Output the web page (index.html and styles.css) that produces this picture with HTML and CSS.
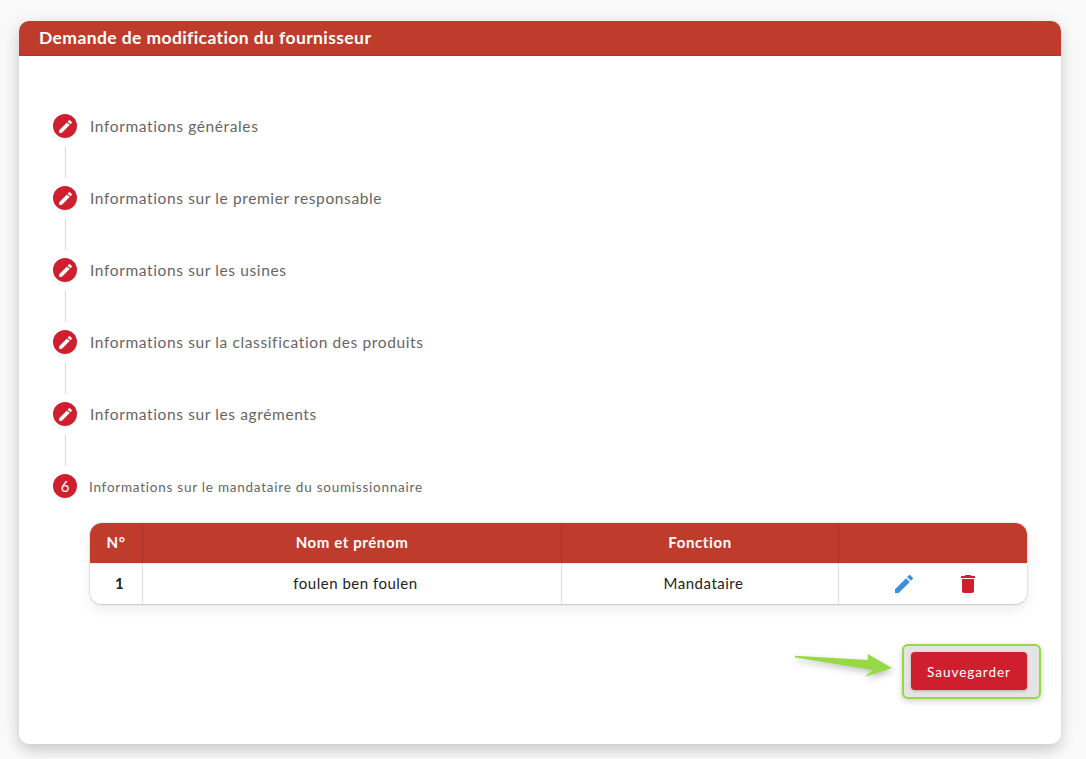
FILE: index.html
```html
<!DOCTYPE html>
<html lang="fr">
<head>
<meta charset="utf-8">
<title>Demande de modification du fournisseur</title>
<link rel="stylesheet" href="styles.css">
</head>
<body>
<main class="card">
  <header class="card-head">Demande de modification du fournisseur</header>
  <div class="card-body">
    <ol class="steps">
      <li class="step">
        <span class="badge"><svg class="badge-icon" viewBox="0 0 24 24"><path d="M3 17.25V21h3.75L17.81 9.94l-3.75-3.75L3 17.25zM20.71 7.04a1 1 0 0 0 0-1.41l-2.34-2.34a1 1 0 0 0-1.41 0l-1.83 1.83 3.75 3.75 1.83-1.83z"/></svg></span>
        <span class="step-label">Informations générales</span>
      </li>
      <li class="connector"></li>
      <li class="step">
        <span class="badge"><svg class="badge-icon" viewBox="0 0 24 24"><path d="M3 17.25V21h3.75L17.81 9.94l-3.75-3.75L3 17.25zM20.71 7.04a1 1 0 0 0 0-1.41l-2.34-2.34a1 1 0 0 0-1.41 0l-1.83 1.83 3.75 3.75 1.83-1.83z"/></svg></span>
        <span class="step-label">Informations sur le premier responsable</span>
      </li>
      <li class="connector"></li>
      <li class="step">
        <span class="badge"><svg class="badge-icon" viewBox="0 0 24 24"><path d="M3 17.25V21h3.75L17.81 9.94l-3.75-3.75L3 17.25zM20.71 7.04a1 1 0 0 0 0-1.41l-2.34-2.34a1 1 0 0 0-1.41 0l-1.83 1.83 3.75 3.75 1.83-1.83z"/></svg></span>
        <span class="step-label">Informations sur les usines</span>
      </li>
      <li class="connector"></li>
      <li class="step">
        <span class="badge"><svg class="badge-icon" viewBox="0 0 24 24"><path d="M3 17.25V21h3.75L17.81 9.94l-3.75-3.75L3 17.25zM20.71 7.04a1 1 0 0 0 0-1.41l-2.34-2.34a1 1 0 0 0-1.41 0l-1.83 1.83 3.75 3.75 1.83-1.83z"/></svg></span>
        <span class="step-label">Informations sur la classification des produits</span>
      </li>
      <li class="connector"></li>
      <li class="step">
        <span class="badge"><svg class="badge-icon" viewBox="0 0 24 24"><path d="M3 17.25V21h3.75L17.81 9.94l-3.75-3.75L3 17.25zM20.71 7.04a1 1 0 0 0 0-1.41l-2.34-2.34a1 1 0 0 0-1.41 0l-1.83 1.83 3.75 3.75 1.83-1.83z"/></svg></span>
        <span class="step-label">Informations sur les agréments</span>
      </li>
      <li class="connector"></li>
      <li class="step">
        <span class="badge">6</span>
        <span class="step-label step-label-active">Informations sur le mandataire du soumissionnaire</span>
      </li>
    </ol>

    <table class="grid">
      <thead>
        <tr>
          <th class="col-num">N°</th>
          <th class="col-name">Nom et prénom</th>
          <th class="col-role">Fonction</th>
          <th class="col-actions"></th>
        </tr>
      </thead>
      <tbody>
        <tr>
          <td class="cell-num">1</td>
          <td>foulen ben foulen</td>
          <td>Mandataire</td>
          <td class="cell-actions">
            <div class="actions">
              <svg class="action-icon icon-edit" viewBox="0 0 24 24"><path d="M3 17.25V21h3.75L17.81 9.94l-3.75-3.75L3 17.25zM20.71 7.04a1 1 0 0 0 0-1.41l-2.34-2.34a1 1 0 0 0-1.41 0l-1.83 1.83 3.75 3.75 1.83-1.83z"/></svg>
              <svg class="action-icon icon-delete" viewBox="0 0 24 24"><path d="M6 19c0 1.1.9 2 2 2h8c1.1 0 2-.9 2-2V7H6v12zM19 4h-3.5l-1-1h-5l-1 1H5v2h14V4z"/></svg>
            </div>
          </td>
        </tr>
      </tbody>
    </table>

    <div class="form-foot">
      <div class="highlight-wrap">
        <svg class="arrow" viewBox="0 0 100 26" width="100" height="26"><polygon points="0,2.8 73,7 72.7,1 97,15 70,23.7 78,17 0,4.4"/></svg>
        <span class="highlight"></span>
        <button class="save" type="button">Sauvegarder</button>
      </div>
    </div>
  </div>
</main>
</body>
</html>
```

FILE: styles.css
```css
* {
  box-sizing: border-box;
}

html,
body {
  margin: 0;
  height: 100%;
}

body {
  background: #fafafa;
  padding: 21px 25px 15px 19px;
  font-family: "Lato", "Liberation Sans", sans-serif;
  overflow: hidden;
}

.card {
  height: 723px;
  background: #fff;
  border-radius: 10px;
  box-shadow: 0 8px 14px rgba(0, 0, 0, 0.14), -6px 0 18px rgba(0, 0, 0, 0.05), 6px 0 18px rgba(0, 0, 0, 0.03);
}

.card-head {
  height: 35px;
  padding-left: 20px;
  background: #bf3b2b;
  border-bottom: 1px solid #ad3327;
  border-radius: 10px 10px 0 0;
  color: #fff;
  font-size: 17.5px;
  font-weight: 700;
  line-height: 33px;
  letter-spacing: 0.4px;
}

.card-body {
  padding: 58px 34px 0;
}

.steps {
  list-style: none;
  margin: 0;
  padding: 0;
}

.step {
  display: flex;
  align-items: center;
  gap: 13px;
  height: 24px;
}

.badge {
  display: flex;
  align-items: center;
  justify-content: center;
  flex: none;
  width: 24px;
  height: 24px;
  border-radius: 50%;
  background: #cf1f2e;
  color: #fff;
  font-size: 15px;
}

.badge-icon {
  width: 17px;
  height: 17px;
  fill: #fff;
}

.step-label {
  color: #666;
  font-size: 15.5px;
  letter-spacing: 0.62px;
  white-space: nowrap;
}

.step-label-active {
  margin-left: -1px;
  padding-top: 2px;
  font-size: 13.5px;
  letter-spacing: 0.76px;
}

.connector {
  width: 1px;
  height: 32px;
  margin: 8px 0 8px 12px;
  background: #ddd;
}

.grid {
  width: 937px;
  height: 81px;
  margin: 25px 0 0 37px;
  border-collapse: separate;
  border-spacing: 0;
  table-layout: fixed;
  border-radius: 12px;
  box-shadow: 0 0 2px rgba(0, 0, 0, 0.2), 0 1px 2px rgba(0, 0, 0, 0.12), 0 6px 14px rgba(0, 0, 0, 0.07);
  font-size: 15px;
}

.grid th {
  height: 40px;
  padding: 0 0 2px;
  background: #bf3b2b;
  color: #fff;
  font-weight: 700;
  letter-spacing: 0.6px;
  border-right: 1px solid #ad3327;
}

.grid th:first-child {
  border-top-left-radius: 12px;
}

.grid th:last-child {
  border-top-right-radius: 12px;
  border-right: 0;
}

.grid td {
  height: 40px;
  padding: 0 0 2px 7px;
  border-top: 1px solid #eee;
  border-right: 1px solid #ddd;
  background: #fff;
  color: #222;
  text-align: center;
  letter-spacing: 0.5px;
}

.grid td:first-child {
  border-bottom-left-radius: 12px;
}

.grid td:last-child {
  border-bottom-right-radius: 12px;
  border-right: 0;
}

.col-num {
  width: 53px;
}

.col-name {
  width: 419px;
}

.col-role {
  width: 277px;
}

.cell-num {
  font-weight: 700;
}

.grid .cell-actions {
  padding: 0;
}

.actions {
  display: flex;
  gap: 40px;
  padding-left: 53px;
}

.action-icon {
  width: 24px;
  height: 24px;
}

.icon-edit {
  fill: #3a8fdc;
}

.icon-delete {
  fill: #cf1f2e;
}

.form-foot {
  display: flex;
  justify-content: flex-end;
  margin-top: 48px;
}

.highlight-wrap {
  position: relative;
}

.save {
  display: block;
  position: relative;
  width: 116px;
  height: 38px;
  padding: 2px 0 0;
  border: 0;
  border-radius: 4px;
  background: #cf1f2e;
  color: #fff;
  font-family: inherit;
  font-size: 13.5px;
  letter-spacing: 0.95px;
  box-shadow: 0 1px 3px rgba(0, 0, 0, 0.25);
}

.highlight {
  position: absolute;
  left: -9px;
  top: -8px;
  width: 139px;
  height: 55px;
  border: 2px solid #96d944;
  border-radius: 6px;
  background: #e4e4e4;
  box-shadow: 0 2px 6px rgba(0, 0, 0, 0.2);
}

.arrow {
  position: absolute;
  left: -116px;
  top: 1px;
  fill: #96d944;
  filter: drop-shadow(1px 3px 3px rgba(0, 0, 0, 0.25));
}
```
